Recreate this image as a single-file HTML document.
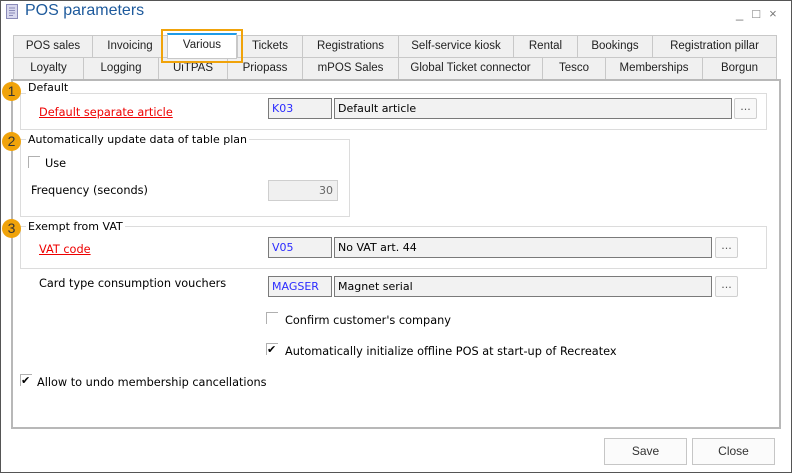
<!DOCTYPE html>
<html><head><style>
*{box-sizing:border-box;margin:0;padding:0}
body{width:792px;height:473px;position:relative;background:#fff;font-family:"DejaVu Sans","Liberation Sans",sans-serif;font-size:11px;color:#000;overflow:hidden}
.a{position:absolute}
.win{left:0;top:0;width:792px;height:473px;border:1px solid #555}
.tab{position:absolute;height:23px;background:#f0f0f0;border:1px solid #c8c8c8;font-family:"Liberation Sans",sans-serif;font-size:11.5px;color:#222;text-align:center;line-height:21px}
.grp{position:absolute;border:1px solid #dcdcdc}
.lg{position:absolute;background:#fff;padding:0 2px;font-size:11px;line-height:13px}
.num{position:absolute;width:19px;height:19px;border-radius:50%;background:#f0a30a;color:#333;font-family:"Liberation Sans",sans-serif;font-size:14px;text-align:center;line-height:19px}
.inp{position:absolute;height:21px;background:#f2f2f2;border:1px solid #7a7a7a;line-height:19px;padding-left:3px;font-size:11px}
.code{color:#2b2bff}
.btn{position:absolute;width:23px;height:21px;border:1px solid #cfcfcf;border-radius:2px;background:#f8f8f8;text-align:center;line-height:16px;color:#555}
.red{color:#e00;text-decoration:underline}
.t{font-size:11.3px}
.cb{position:absolute;width:12px;height:12px;border-left:1px solid #b0b0b0;border-top:1px solid #b0b0b0;font-size:11px;line-height:11px}
.pb{position:absolute;width:83px;height:27px;border:1px solid #c6c6c6;background:#fbfbfb;font-family:"Liberation Sans",sans-serif;font-size:12px;text-align:center;line-height:25px;color:#333}
</style></head><body>
<div class="a win"></div>
<svg class="a" style="left:6px;top:4px" width="12" height="15"><rect x="0.5" y="0.5" width="11" height="14" fill="#d8d8ee" stroke="#8a8ab8"/><path d="M3 4h6M3 6.5h6M3 9h6M3 11.5h4" stroke="#8a8ab8"/></svg>
<div class="a" style="left:25px;top:2px;font-family:'Liberation Sans',sans-serif;font-size:16px;color:#1e5a9c">POS parameters</div>
<div class="a" style="left:736px;top:6px;font-family:'Liberation Sans',sans-serif;font-size:13px;color:#777;letter-spacing:9px">_□×</div>

<div class="tab" style="left:13px;top:35px;width:80px">POS sales</div>
<div class="tab" style="left:92px;top:35px;width:76px">Invoicing</div>
<div class="tab" style="left:237px;top:35px;width:66px">Tickets</div>
<div class="tab" style="left:302px;top:35px;width:97px">Registrations</div>
<div class="tab" style="left:398px;top:35px;width:116px">Self-service kiosk</div>
<div class="tab" style="left:513px;top:35px;width:65px">Rental</div>
<div class="tab" style="left:577px;top:35px;width:76px">Bookings</div>
<div class="tab" style="left:652px;top:35px;width:125px">Registration pillar</div>
<div class="tab" style="left:13px;top:57px;width:71px">Loyalty</div>
<div class="tab" style="left:83px;top:57px;width:76px">Logging</div>
<div class="tab" style="left:158px;top:57px;width:70px">UiTPAS</div>
<div class="tab" style="left:227px;top:57px;width:76px">Priopass</div>
<div class="tab" style="left:302px;top:57px;width:97px">mPOS Sales</div>
<div class="tab" style="left:398px;top:57px;width:145px">Global Ticket connector</div>
<div class="tab" style="left:542px;top:57px;width:64px">Tesco</div>
<div class="tab" style="left:605px;top:57px;width:98px">Memberships</div>
<div class="tab" style="left:702px;top:57px;width:75px">Borgun</div>
<div class="tab" style="left:167px;top:33px;width:70px;height:26px;background:#fff;border-top:2px solid #1e9be8;line-height:21px;color:#222">Various</div>
<div class="a" style="left:161px;top:29px;width:82px;height:34px;border:2px solid #f0a30a"></div>

<div class="a" style="left:11px;top:79px;width:770px;height:350px;border:2px solid #b8b8b8;background:#fff"></div>

<div class="grp" style="left:20px;top:93px;width:747px;height:37px"></div>
<div class="lg" style="left:26px;top:81px">Default</div>
<div class="num" style="left:2px;top:82px">1</div>
<div class="a red t" style="left:39px;top:106px">Default separate article</div>
<div class="inp code" style="left:268px;top:98px;width:64px">K03</div>
<div class="inp" style="left:334px;top:98px;width:398px">Default article</div>
<div class="btn" style="left:734px;top:98px">...</div>

<div class="grp" style="left:20px;top:139px;width:330px;height:78px"></div>
<div class="lg" style="left:26px;top:133px">Automatically update data of table plan</div>
<div class="num" style="left:2px;top:132px">2</div>
<div class="cb" style="left:28px;top:156px"></div>
<div class="a t" style="left:45px;top:157px">Use</div>
<div class="a t" style="left:31px;top:184px">Frequency (seconds)</div>
<div class="a" style="left:268px;top:180px;width:70px;height:21px;background:#f0f0f0;border:1px solid #cfcfcf;text-align:right;padding-right:4px;line-height:19px;color:#666">30</div>

<div class="grp" style="left:20px;top:226px;width:747px;height:43px"></div>
<div class="lg" style="left:26px;top:220px">Exempt from VAT</div>
<div class="num" style="left:2px;top:219px">3</div>
<div class="a red t" style="left:39px;top:243px">VAT code</div>
<div class="inp code" style="left:268px;top:237px;width:64px">V05</div>
<div class="inp" style="left:334px;top:237px;width:378px">No VAT art. 44</div>
<div class="btn" style="left:715px;top:237px">...</div>

<div class="a t" style="left:39px;top:277px">Card type consumption vouchers</div>
<div class="inp code" style="left:268px;top:276px;width:64px">MAGSER</div>
<div class="inp" style="left:334px;top:276px;width:378px">Magnet serial</div>
<div class="btn" style="left:715px;top:276px">...</div>

<div class="cb" style="left:266px;top:312px"></div>
<div class="a t" style="left:285px;top:314px">Confirm customer's company</div>
<div class="cb" style="left:266px;top:343px">✔</div>
<div class="a t" style="left:285px;top:345px">Automatically initialize offline POS at start-up of Recreatex</div>
<div class="cb" style="left:20px;top:374px">✔</div>
<div class="a t" style="left:37px;top:376px">Allow to undo membership cancellations</div>

<div class="pb" style="left:604px;top:438px">Save</div>
<div class="pb" style="left:692px;top:438px">Close</div>
</body></html>
